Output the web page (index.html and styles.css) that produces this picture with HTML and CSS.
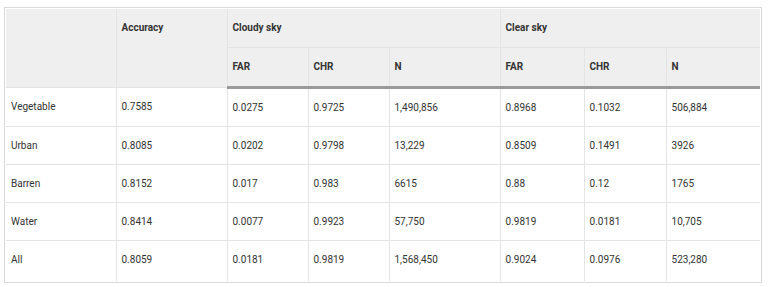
FILE: index.html
```html
<!DOCTYPE html>
<html lang="en">
<head>
  <meta charset="UTF-8">
  <title>Cloud detection accuracy</title>
  <link rel="stylesheet" href="styles.css">
</head>
<body>
  <div class="table-wrap">
    <table class="results">
      <colgroup>
        <col class="c-type">
        <col class="c-acc">
        <col class="c-far">
        <col class="c-chr">
        <col class="c-n">
        <col class="c-far2">
        <col class="c-chr2">
        <col class="c-n2">
      </colgroup>
      <thead>
        <tr>
          <th rowspan="2"></th>
          <th rowspan="2">Accuracy</th>
          <th colspan="3">Cloudy sky</th>
          <th colspan="3">Clear sky</th>
        </tr>
        <tr>
          <th>FAR</th>
          <th>CHR</th>
          <th>N</th>
          <th>FAR</th>
          <th>CHR</th>
          <th>N</th>
        </tr>
      </thead>
      <tbody>
        <tr><td>Vegetable</td><td>0.7585</td><td>0.0275</td><td>0.9725</td><td>1,490,856</td><td>0.8968</td><td>0.1032</td><td>506,884</td></tr>
        <tr><td>Urban</td><td>0.8085</td><td>0.0202</td><td>0.9798</td><td>13,229</td><td>0.8509</td><td>0.1491</td><td>3926</td></tr>
        <tr><td>Barren</td><td>0.8152</td><td>0.017</td><td>0.983</td><td>6615</td><td>0.88</td><td>0.12</td><td>1765</td></tr>
        <tr><td>Water</td><td>0.8414</td><td>0.0077</td><td>0.9923</td><td>57,750</td><td>0.9819</td><td>0.0181</td><td>10,705</td></tr>
        <tr><td>All</td><td>0.8059</td><td>0.0181</td><td>0.9819</td><td>1,568,450</td><td>0.9024</td><td>0.0976</td><td>523,280</td></tr>
      </tbody>
    </table>
  </div>
</body>
</html>
```

FILE: styles.css
```css
* { box-sizing: border-box; }

body {
  margin: 0;
  padding: 7px 6px 0 4px;
  background: #fff;
  font-family: Roboto, 'Liberation Sans', sans-serif;
  color: #333;
}

.table-wrap {
  border: 1px solid #d9d9d9;
  padding: 1px;
}

.results {
  width: 100%;
  table-layout: fixed;
  border-collapse: collapse;
  font-size: 10px;
  line-height: 14px;
}

.c-type { width: 110px; }
.c-acc  { width: 111px; }
.c-far  { width: 81px; }
.c-chr  { width: 81px; }
.c-n    { width: 111px; }
.c-far2 { width: 84px; }
.c-chr2 { width: 82px; }
.c-n2   { width: auto; }

.results th,
.results td {
  border: 1px solid #e4e4e4;
  padding: 12px 5px;
  text-align: left;
  vertical-align: top;
}

.results th {
  background: #efefef;
  font-weight: 700;
  height: 38px;
}

.results thead tr:last-child th {
  border-bottom: 3px solid #9a9a9a;
}

.results td {
  height: 38px;
  padding-bottom: 11px;
  font-weight: 400;
}

.results tr > :first-child { border-left: none; }
.results tr > :last-child { border-right: none; }
.results thead tr:first-child th { border-top: none; }
.results tbody tr:last-child td { border-bottom: none; height: 40px; }
.results thead tr:last-child th:first-child { border-left: 1px solid #e4e4e4; }
```
